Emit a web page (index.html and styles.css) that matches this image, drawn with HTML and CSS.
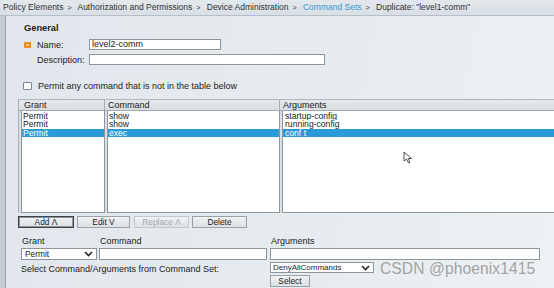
FILE: index.html
```html
<!DOCTYPE html>
<html>
<head>
<meta charset="utf-8">
<link rel="stylesheet" href="styles.css">
</head>
<body>
<div class="crumbs">
  <span>Policy Elements</span><span class="sep">&gt;</span>
  <span>Authorization and Permissions</span><span class="sep">&gt;</span>
  <span>Device Administration</span><span class="sep">&gt;</span>
  <span class="link">Command Sets</span><span class="sep">&gt;</span>
  <span>Duplicate: "level1-comm"</span>
</div>
<div class="main">
  <div class="strip"></div>
  <div class="panel">
    <div class="general">
      <div class="title">General</div>
      <div class="frow">
        <svg class="req" width="7" height="6" viewBox="0 0 7 6"><rect x="0" y="0" width="7" height="6" rx="1" fill="#f08a1c"/><rect x="2" y="2" width="3" height="2" fill="#ffd27a"/></svg>
        <span class="lbl">Name:</span>
        <div class="input name">level2-comm</div>
      </div>
      <div class="frow">
        <span class="req-space"></span>
        <span class="lbl">Description:</span>
        <div class="input desc"></div>
      </div>
      <div class="check">
        <span class="box"></span>
        <span>Permit any command that is not in the table below</span>
      </div>
    </div>

    <div class="table">
      <div class="thead">
        <div class="th">Grant</div>
        <div class="th">Command</div>
        <div class="th">Arguments</div>
      </div>
      <div class="tbody">
        <div class="col c1">
          <div class="tr">Permit</div>
          <div class="tr">Permit</div>
          <div class="tr sel">Permit</div>
        </div>
        <div class="col c2">
          <div class="tr">show</div>
          <div class="tr">show</div>
          <div class="tr sel">exec</div>
        </div>
        <div class="col c3">
          <div class="tr">startup-config</div>
          <div class="tr">running-config</div>
          <div class="tr sel">conf t</div>
        </div>
      </div>
    </div>

    <div class="buttons">
      <div class="btn def">Add &Lambda;</div>
      <div class="btn b2">Edit V</div>
      <div class="btn b3 dis">Replace &Lambda;</div>
      <div class="btn b4">Delete</div>
    </div>

    <div class="editor">
      <div class="elbl">Grant</div>
      <div class="elbl">Command</div>
      <div class="elbl">Arguments</div>
      <div class="select grant"><span>Permit</span><svg width="9" height="6" viewBox="0 0 9 6"><path d="M1 1 L4.5 4.5 L8 1" fill="none" stroke="#222" stroke-width="1.6"/></svg></div>
      <div class="input cmd"></div>
      <div class="input args"></div>
      <div class="settext">Select Command/Arguments from Command Set:</div>
      <div class="setcol">
        <div class="select deny"><span>DenyAllCommands</span><svg width="9" height="6" viewBox="0 0 9 6"><path d="M1 1 L4.5 4.5 L8 1" fill="none" stroke="#222" stroke-width="1.6"/></svg></div>
        <div class="btn selbtn">Select</div>
      </div>
    </div>
  </div>
</div>
<svg class="cursor" width="12" height="14" viewBox="0 0 12 14"><path d="M1 1 L1 10 L3.5 8 L5.5 12 L7 11.3 L5.2 7.5 L8.5 7.5 Z" fill="#fff" stroke="#4a4f56" stroke-width="1"/></svg>
<div class="watermark">CSDN @phoenix1415</div>
</body>
</html>
```

FILE: styles.css
```css
* { box-sizing: border-box; }
html, body { margin: 0; padding: 0; }
body {
  width: 554px;
  height: 288px;
  overflow: hidden;
  font-family: "Liberation Sans", Arial, sans-serif;
  font-size: 9px;
  color: #222;
  position: relative;
  background: #e3e9ee;
}
.crumbs {
  height: 16px;
  line-height: 14px;
  padding-left: 3px;
  font-size: 8.5px;
  color: #333;
  background: linear-gradient(#e3e8ec, #d8dfe5);
  border-bottom: 1px solid #b7c0c8;
  white-space: nowrap;
}
.crumbs .sep { margin: 0 4px; font-size: 7px; }
.crumbs .link { color: #3a9ad0; }
.main { display: flex; height: 272px; }
.strip {
  width: 6px;
  background: #c4cbd2;
  border-right: 1px solid #98a2ab;
}
.panel {
  flex: 1;
  padding: 7px 0 0 12px;
  background: linear-gradient(100deg, #e1e7ec 0%, #e7ecf0 60%, #edf1f3 100%);
}
.general { padding-left: 3px; }
.title { font-weight: bold; font-size: 9.3px; padding-left: 3px; height: 14px; line-height: 10px; }
.frow { display: flex; align-items: center; height: 15px; }
.req { margin: 0 6px 0 3px; flex: none; }
.req-space { width: 16px; flex: none; }
.lbl { width: 52px; flex: none; }
.input {
  height: 11px;
  background: #fff;
  border: 1px solid #8e969d;
  line-height: 9px;
  padding-left: 2px;
}
.name { width: 132px; }
.desc { width: 236px; }
.check { display: flex; align-items: center; margin-top: 14px; height: 10px; padding-left: 2px; }
.box {
  width: 9px; height: 8px;
  background: #fff;
  border: 1px solid #7d858c;
  border-radius: 1px;
  margin-right: 6px;
}
.table {
  margin-top: 8px;
  height: 114px;
  border-top: 1px solid #b0b8bf;
  border-left: 1px solid #a9b1b8;
  background: #d9dfe4;
}
.thead {
  display: grid;
  grid-template-columns: 86px 175px 1fr;
  height: 11px;
  line-height: 10px;
  background: linear-gradient(#e5e9ec, #d9dee2);
  border-bottom: 1px solid #a3abb2;
}
.th { padding-left: 5px; border-right: 1px solid #a7afb6; }
.th:nth-child(2) { padding-left: 3px; }
.th:nth-child(3) { padding-left: 3px; border-right: none; }
.tbody {
  display: grid;
  grid-template-columns: 84px 173px 1fr;
  column-gap: 2px;
  height: 102px;
  padding: 0 0 0 2px;
}
.col { background: #fff; border: 1px solid #8f979e; border-top: none; padding-top: 1px; }
.c3 { border-right: none; }
.tr { height: 8.4px; line-height: 8.4px; font-size: 8.6px; padding-left: 1px; white-space: nowrap; overflow: hidden; }
.c2 .tr { padding-left: 1px; }
.c3 .tr { padding-left: 2px; }
.tr.sel { background: #2a9bd8; color: #fff; }
.buttons { display: flex; gap: 3px; margin-top: 3px; height: 12px; }
.btn {
  height: 12px;
  line-height: 10px;
  text-align: center;
  font-size: 8.4px;
  background: linear-gradient(#f1f3f4, #dde1e4);
  border: 1px solid #9aa2a9;
  color: #222;
}
.buttons .btn { width: 55px; }
.btn.def { width: 56px; border: 1px solid #3e4348; box-shadow: inset 0 0 0 1px #8c9399; }
.btn.b2 { width: 53px; }
.btn.b3 { margin-left: 1px; }
.btn.dis { color: #a3a9ae; border-color: #c2c8cc; }
.editor {
  display: grid;
  grid-template-columns: 78px 171px 270px;
  grid-template-rows: 12px 12px auto;
  margin-top: 8px;
  padding-left: 3px;
}
.elbl { padding-left: 1px; line-height: 10px; }
.select {
  height: 12px;
  background: #fff;
  border: 1px solid #8e969d;
  display: flex;
  align-items: center;
  justify-content: space-between;
  padding: 0 3px 0 3px;
  font-size: 8.4px;
}
.grant { width: 76px; }
.cmd { width: 168px; height: 12px; }
.args { width: 270px; height: 12px; }
.settext { grid-column: 1 / 3; line-height: 18px; }
.setcol { display: flex; flex-direction: column; gap: 2px; padding-top: 2px; }
.deny { width: 104px; height: 11px; padding-left: 2px; font-size: 8px; }
.selbtn { width: 40px; height: 12px; font-size: 8.4px; }
.cursor { position: absolute; left: 403px; top: 151px; }
.watermark {
  position: absolute;
  left: 380px;
  top: 260px;
  font-size: 15.6px;
  color: #a3a3a3;
  letter-spacing: 0.1px;
}
```
